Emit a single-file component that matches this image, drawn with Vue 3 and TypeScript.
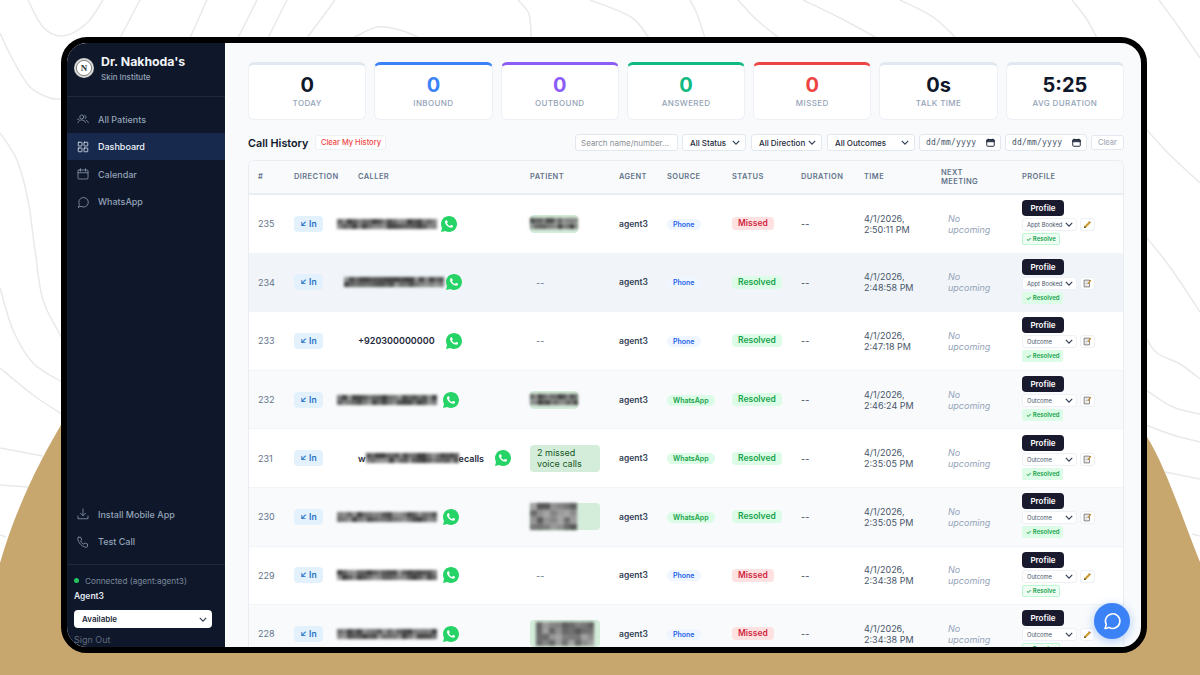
<script setup lang="ts">
type Row = {
  id: number
  callerShift?: number
  callerGap: number
  caller?: string
  split?: boolean
  patient: 'none' | 'slim' | 'text' | 'tall' | 'tall2'
  source: 'Phone' | 'WhatsApp'
  status: 'Missed' | 'Resolved'
  time: string
  outcome: string
  memo: boolean
  hover?: boolean
}

const stats = [
  { value: '0', label: 'TODAY', color: '#0f172a', top: '#e2e8f0' },
  { value: '0', label: 'INBOUND', color: '#3b82f6', top: '#3b82f6' },
  { value: '0', label: 'OUTBOUND', color: '#8b5cf6', top: '#8b5cf6' },
  { value: '0', label: 'ANSWERED', color: '#10b981', top: '#10b981' },
  { value: '0', label: 'MISSED', color: '#ef4444', top: '#ef4444' },
  { value: '0s', label: 'TALK TIME', color: '#0f172a', top: '#e2e8f0' },
  { value: '5:25', label: 'AVG DURATION', color: '#0f172a', top: '#e2e8f0' },
]

const rows: Row[] = [
  { id: 235, callerShift: -21, callerGap: 4, patient: 'slim', source: 'Phone', status: 'Missed', time: '2:50:11 PM', outcome: 'Appt Booked', memo: false },
  { id: 234, callerShift: -14, callerGap: 2, patient: 'none', source: 'Phone', status: 'Resolved', time: '2:48:58 PM', outcome: 'Appt Booked', memo: true, hover: true },
  { id: 233, caller: '+920300000000', callerGap: 11, patient: 'none', source: 'Phone', status: 'Resolved', time: '2:47:18 PM', outcome: 'Outcome', memo: true },
  { id: 232, callerShift: -21, callerGap: 6, patient: 'slim', source: 'WhatsApp', status: 'Resolved', time: '2:46:24 PM', outcome: 'Outcome', memo: true },
  { id: 231, split: true, callerGap: 11, patient: 'text', source: 'WhatsApp', status: 'Resolved', time: '2:35:05 PM', outcome: 'Outcome', memo: true },
  { id: 230, callerShift: -21, callerGap: 6, patient: 'tall', source: 'WhatsApp', status: 'Resolved', time: '2:35:05 PM', outcome: 'Outcome', memo: true },
  { id: 229, callerShift: -21, callerGap: 6, patient: 'none', source: 'Phone', status: 'Missed', time: '2:34:38 PM', outcome: 'Outcome', memo: false },
  { id: 228, callerShift: -21, callerGap: 6, patient: 'tall2', source: 'Phone', status: 'Missed', time: '2:34:38 PM', outcome: 'Outcome', memo: false },
]

// same blurred blocks every run, so the shot stays stable
function mosaic(seed: number, cols: number, lines: number, lo = 60, hi = 150) {
  let s = seed * 7919
  const next = () => {
    s = (s * 1103515245 + 12345) % 2147483648
    return lo + ((s >> 8) % (hi - lo))
  }
  const layers: string[] = []
  const rowPct = lines > 1 ? 100 / (lines - 1) : 0
  for (let r = 0; r < lines; r++) {
    const stops: string[] = []
    for (let c = 0; c < cols; c++) {
      const g = next()
      stops.push(`rgb(${g},${g},${g}) ${(c / cols) * 100}% ${((c + 1) / cols) * 100}%`)
    }
    layers.push(`linear-gradient(90deg,${stops.join(',')}) 0 ${r * rowPct}% / 100% ${100 / lines}% no-repeat`)
  }
  return layers.join(',')
}

function smooth(p: number[][]) {
  let d = `M${p[0][0]} ${p[0][1]}`
  for (let i = 0; i < p.length - 1; i++) {
    const a = p[i - 1] || p[i]
    const b = p[i]
    const c = p[i + 1]
    const e = p[i + 2] || c
    d += ` C${b[0] + (c[0] - a[0]) / 6} ${b[1] + (c[1] - a[1]) / 6} ${c[0] - (e[0] - b[0]) / 6} ${c[1] - (e[1] - b[1]) / 6} ${c[0]} ${c[1]}`
  }
  return d
}

const contours = [
  [[28, 0], [43, 27], [63, 36], [87, 23], [103, 0]],
  [[0, 33], [13, 60], [30, 87], [50, 98], [62, 99]],
  [[0, 133], [17, 160], [28, 200], [35, 250], [43, 300], [62, 338]],
  [[0, 288], [13, 330], [33, 363], [62, 382]],
  [[0, 368], [33, 395], [62, 414]],
  [[0, 448], [43, 456]],
  [[0, 485], [28, 487]],
  [[0, 535], [6, 537]],
  [[120, 38], [140, 0]],
  [[190, 38], [207, 0]],
  [[238, 38], [257, 0]],
  [[268, 38], [287, 0]],
  [[307, 38], [335, 0]],
  [[353, 38], [377, 27], [400, 30], [420, 38]],
  [[518, 0], [529, 14], [531, 38]],
  [[590, 0], [631, 17], [649, 38]],
  [[690, 0], [697, 14], [705, 38]],
  [[738, 0], [757, 20], [779, 38]],
  [[803, 0], [840, 18], [877, 38]],
  [[900, 0], [933, 17], [956, 38]],
  [[1072, 0], [1086, 18], [1097, 38]],
  [[1159, 0], [1178, 26], [1200, 58]],
  [[1146, 129], [1170, 155], [1200, 183]],
  [[1146, 237], [1170, 267], [1200, 312]],
  [[1146, 338], [1157, 353], [1180, 364], [1200, 379]],
  [[1146, 390], [1173, 407], [1200, 414]],
  [[1146, 425], [1173, 435], [1200, 442]],
  [[1165, 472], [1200, 479]],
  [[1192, 534], [1200, 536]],
].map(smooth)
</script>

<template>
  <div class="page">
    <svg class="backdrop" viewBox="0 0 1200 675" width="1200" height="675">
      <path v-for="(d, i) in contours" :key="i" :d="d" class="contour" />
      <path d="M0 563C15 510 40 460 61 425L200 300H1000L1147 437C1165 465 1185 525 1200 562V675H0Z" fill="#c8a76f" />
    </svg>

    <div class="frame">
      <aside class="sidebar">
        <div class="brand">
          <svg class="logo" viewBox="0 0 20 20" width="20" height="20">
            <circle cx="10" cy="10" r="10" fill="#d9d9d6" />
            <circle cx="10" cy="10" r="7.600" fill="#fff" stroke="#6b6b6b" stroke-width=".8" />
            <text x="10" y="13.200" text-anchor="middle" font-size="9" font-weight="700" font-family="Liberation Serif, serif" fill="#333">N</text>
          </svg>
          <div>
            <div class="brand-name">Dr. Nakhoda's</div>
            <div class="brand-sub">Skin Institute</div>
          </div>
        </div>

        <nav class="nav">
          <a class="nav-item">
            <svg class="nav-icon" viewBox="0 0 24 24"><circle cx="9.500" cy="8" r="4" /><path d="M1 12.500h3M2 19c1-3.500 4-5 7.500-5s6.500 1.500 7.500 5M15.500 4.500a4 4 0 0 1 1 7M19 15c2 .8 3 2 3.500 4.500" /></svg>
            All Patients
          </a>
          <a class="nav-item active">
            <svg class="nav-icon" viewBox="0 0 24 24"><rect x="2.500" y="2.500" width="7.500" height="7.500" rx="1" /><rect x="14" y="2.500" width="7.500" height="7.500" rx="1" /><rect x="2.500" y="14" width="7.500" height="7.500" rx="1" /><rect x="14" y="14" width="7.500" height="7.500" rx="1" /></svg>
            Dashboard
          </a>
          <a class="nav-item">
            <svg class="nav-icon" viewBox="0 0 24 24"><rect x="2" y="4" width="20" height="18" rx="2" /><path d="M2 9.500h20M7 1.500v5M17 1.500v5" /></svg>
            Calendar
          </a>
          <a class="nav-item">
            <svg class="nav-icon" viewBox="0 0 24 24"><path d="M3 22l1.800-4.800A9.500 9.500 0 1 1 8 20.600C6.300 21.500 4.800 22 3 22z" /></svg>
            WhatsApp
          </a>
        </nav>

        <div class="nav bottom">
          <a class="nav-item">
            <svg class="nav-icon" viewBox="0 0 24 24"><path d="M12 2v13M7 10.500l5 5 5-5M2 16v5.500h20V16" /></svg>
            Install Mobile App
          </a>
          <a class="nav-item">
            <svg class="nav-icon" viewBox="0 0 24 24"><path d="M3 2.500h4.500l2 5.500-2.500 2c1.300 2.800 3.500 5 6.500 6.500l2-2.500 5.500 2V21c0 1-1 1.500-2 1.500C10 22 2 13.500 1.500 4.500c0-1 .6-2 1.500-2z" /></svg>
            Test Call
          </a>
        </div>

        <div class="agent">
          <div class="conn"><span class="dot"></span>Connected (agent:agent3)</div>
          <div class="agent-name">Agent3</div>
          <select class="agent-select"><option>Available</option></select>
          <div class="signout">Sign Out</div>
        </div>
      </aside>

      <main class="main">
        <section class="stats">
          <div v-for="s in stats" :key="s.label" class="stat" :style="{ borderTopColor: s.top }">
            <div class="stat-value" :style="{ color: s.color }">{{ s.value }}</div>
            <div class="stat-label">{{ s.label }}</div>
          </div>
        </section>

        <div class="toolbar">
          <h2 class="title">Call History</h2>
          <button class="clear-mine">Clear My History</button>
          <div class="filters">
            <input class="search" placeholder="Search name/number..." />
            <select class="filter w-status"><option>All Status</option></select>
            <select class="filter w-direction"><option>All Direction</option></select>
            <select class="filter w-outcome"><option>All Outcomes</option></select>
            <div v-for="n in 2" :key="n" class="date">
              <span>dd/mm/yyyy</span>
              <svg viewBox="0 0 12 12" width="9" height="9"><rect x="1" y="2" width="10" height="9" rx="1" fill="none" stroke="#1e293b" stroke-width="1.300" /><path d="M1 3h10v2H1zM3 .8v2M9 .8v2" fill="#1e293b" stroke="#1e293b" /></svg>
            </div>
            <button class="clear-all">Clear</button>
          </div>
        </div>

        <div class="table-wrap">
          <table class="calls">
            <colgroup>
              <col style="width: 36px" /><col style="width: 64px" /><col style="width: 172px" /><col style="width: 89px" />
              <col style="width: 48px" /><col style="width: 65px" /><col style="width: 69px" /><col style="width: 63px" />
              <col style="width: 77px" /><col style="width: 81px" /><col />
            </colgroup>
            <thead>
              <tr>
                <th>#</th><th>DIRECTION</th><th>CALLER</th><th>PATIENT</th><th>AGENT</th><th>SOURCE</th>
                <th>STATUS</th><th>DURATION</th><th>TIME</th><th>NEXT<br />MEETING</th><th>PROFILE</th>
              </tr>
            </thead>
            <tbody>
              <tr v-for="(r, i) in rows" :key="r.id" :class="{ alt: i % 2 === 1, hover: r.hover }">
                <td class="num">{{ r.id }}</td>
                <td><span class="dir">↙ In</span></td>
                <td>
                  <div class="caller">
                    <span v-if="r.caller">{{ r.caller }}</span>
                    <template v-else-if="r.split">
                      <span>w</span>
                      <i class="blur" :style="{ width: '93px', height: '10px', background: mosaic(r.id, 20, 2) }"></i>
                      <span>ecalls</span>
                    </template>
                    <i v-else class="blur" :style="{ width: '100px', height: '10px', marginLeft: r.callerShift + 'px', background: mosaic(r.id, 20, 2) }"></i>
                    <svg class="wa" :style="{ marginLeft: r.callerGap + 'px' }" viewBox="0 0 24 24" width="16" height="16">
                      <path fill="#25d366" d="M12 0C5.373 0 0 5.373 0 12c0 2.117.554 4.100 1.523 5.824L0 24l6.335-1.652A11.940 11.940 0 0 0 12 24c6.627 0 12-5.373 12-12S18.627 0 12 0z" />
                      <path fill="#fff" d="M17.472 14.382c-.297-.149-1.758-.867-2.030-.967-.273-.099-.471-.148-.67.150-.197.297-.767.966-.94 1.164-.173.199-.347.223-.644.075-.297-.150-1.255-.463-2.390-1.475-.883-.788-1.480-1.761-1.653-2.059-.173-.297-.018-.458.130-.606.134-.133.298-.347.446-.520.149-.174.198-.298.298-.497.099-.198.050-.371-.025-.520-.075-.149-.669-1.612-.916-2.207-.242-.579-.487-.500-.669-.510-.173-.008-.371-.010-.570-.010-.198 0-.520.074-.792.372-.272.297-1.040 1.016-1.040 2.479 0 1.462 1.065 2.875 1.213 3.074.149.198 2.096 3.200 5.077 4.487.709.306 1.262.489 1.694.625.712.227 1.360.195 1.871.118.571-.085 1.758-.719 2.006-1.413.248-.694.248-1.289.173-1.413-.074-.124-.272-.198-.570-.347z" />
                    </svg>
                  </div>
                </td>
                <td>
                  <span v-if="r.patient === 'none'" class="dash pad">--</span>
                  <div v-else-if="r.patient === 'slim'" class="tag slim">
                    <i class="blur" :style="{ width: '48px', height: '11px', background: mosaic(r.id + 3, 12, 2) }"></i>
                  </div>
                  <div v-else-if="r.patient === 'text'" class="tag wide text">2 missed<br />voice calls</div>
                  <div v-else-if="r.patient === 'tall'" class="tag wide tall">
                    <i class="blur" :style="{ width: '47px', height: '27px', background: mosaic(r.id, 7, 4, 85, 165) }"></i>
                  </div>
                  <div v-else class="tag wide tall">
                    <i class="blur inset" :style="{ width: '58px', height: '24px', background: mosaic(r.id, 9, 4, 85, 165) }"></i>
                  </div>
                </td>
                <td class="agent-cell">agent3</td>
                <td><span class="source" :class="r.source === 'Phone' ? 'phone' : 'whats'">{{ r.source }}</span></td>
                <td><span class="status" :class="r.status.toLowerCase()">{{ r.status }}</span></td>
                <td class="dash">--</td>
                <td class="time">4/1/2026,<br />{{ r.time }}</td>
                <td class="next">No<br />upcoming</td>
                <td>
                  <div class="profile">
                    <button class="profile-btn">Profile</button>
                    <div class="profile-line">
                      <select class="outcome"><option>{{ r.outcome }}</option></select>
                      <button class="edit">
                        <svg v-if="r.memo" viewBox="0 0 12 12" width="9" height="9"><path d="M1.500 1.500h7v9h-7z" fill="#fff" stroke="#555" stroke-width="1" /><path d="M3 4h4M3 6h4M3 8h3" stroke="#999" stroke-width=".7" /><path d="M6.500 6.500L10.500 1.500" stroke="#c58b2a" stroke-width="1.500" /></svg>
                        <svg v-else viewBox="0 0 12 12" width="9" height="9"><path d="M1.500 10.500l.6-2.600 6-6 2 2-6 6z" fill="#d19a2a" /><path d="M8.100 1.900l2 2" stroke="#7a4b1e" stroke-width="1.200" /><path d="M1.500 10.500l.6-2.600 2 2z" fill="#3d2c1c" /></svg>
                      </button>
                    </div>
                    <span class="resolve" :class="{ done: r.memo }">✓ {{ r.memo ? 'Resolved' : 'Resolve' }}</span>
                  </div>
                </td>
              </tr>
            </tbody>
          </table>
        </div>

        <button class="fab">
          <svg viewBox="0 0 24 24" width="20" height="20"><path d="M3.500 21l1.700-4.600A8.700 8.700 0 1 1 8.300 19.600C6.800 20.400 5.200 20.900 3.500 21z" fill="none" stroke="#fff" stroke-width="1.800" stroke-linejoin="round" /></svg>
        </button>
      </main>
    </div>
  </div>
</template>

<style scoped>
.page {
  position: relative;
  width: 1200px;
  height: 675px;
  overflow: hidden;
  padding: 37px 53px 22px 61px;
  box-sizing: border-box;
  font-family: Inter, "Liberation Sans", sans-serif;
}
.backdrop {
  position: absolute;
  left: 0;
  top: 0;
}
.contour {
  fill: none;
  stroke: #e9e9e9;
  stroke-width: 1.500;
}
.frame {
  position: relative;
  display: flex;
  height: 616px;
  box-sizing: border-box;
  border: 6px solid #000;
  border-radius: 26px;
  overflow: hidden;
  background: #f8fafc;
}

/* sidebar */
.sidebar {
  width: 158px;
  flex: none;
  display: flex;
  flex-direction: column;
  background: #0f172a;
  color: #94a3b8;
}
.brand {
  display: flex;
  align-items: center;
  gap: 7px;
  height: 54px;
  padding: 0 7px 4px;
  box-sizing: border-box;
  border-bottom: 1px solid #1e293b;
}
.logo {
  flex: none;
  margin-top: 1px;
}
.brand-name {
  font-size: 12.300px;
  font-weight: 700;
  color: #f1f5f9;
  line-height: 15px;
}
.brand-sub {
  font-size: 8px;
  font-weight: 500;
  color: #94a3b8;
  margin-top: 3px;
}
.nav {
  display: flex;
  flex-direction: column;
  padding-top: 8px;
}
.nav.bottom {
  margin-top: auto;
  padding: 0 0 9px;
  border-bottom: 1px solid #1e293b;
}
.nav-item {
  display: flex;
  align-items: center;
  gap: 9px;
  height: 27.500px;
  box-sizing: border-box;
  padding: 1px 0 0 10px;
  font-size: 9px;
  font-weight: 500;
  color: #94a3b8;
}
.nav-item.active {
  background: #172a4d;
  color: #f1f5f9;
}
.nav-icon {
  width: 12px;
  height: 12px;
  flex: none;
  fill: none;
  stroke: currentColor;
  stroke-width: 1.500;
  stroke-linecap: round;
  stroke-linejoin: round;
}
.agent {
  padding: 10px 7px 0;
  height: 82px;
  box-sizing: border-box;
}
.conn {
  display: flex;
  align-items: center;
  gap: 6px;
  font-size: 8.200px;
  color: #7c899c;
  height: 11px;
}
.dot {
  width: 5px;
  height: 5px;
  border-radius: 50%;
  background: #22c55e;
}
.agent-name {
  font-size: 8.500px;
  font-weight: 600;
  color: #e2e8f0;
  margin-top: 5px;
  height: 11px;
}
select {
  appearance: none;
  background-color: #fff;
  background-image: url("data:image/svg+xml,%3Csvg xmlns='http://www.w3.org/2000/svg' viewBox='0 0 10 6'%3E%3Cpath d='M1 1l4 4 4-4' fill='none' stroke='%23334155' stroke-width='1.500'/%3E%3C/svg%3E");
  background-repeat: no-repeat;
  background-position: right 5px center;
  background-size: 8px 5px;
  outline: none;
}
.agent-select {
  display: block;
  width: 138px;
  height: 18px;
  margin-top: 8px;
  padding: 0 8px;
  border: 0;
  border-radius: 4px;
  font: 600 8px Inter, sans-serif;
  color: #1e293b;
}
.signout {
  font-size: 9px;
  color: #5e6b7e;
  margin-top: 6px;
}

/* main */
.main {
  position: relative;
  flex: 1;
  min-width: 0;
  padding: 19px 17px 0 22px;
  border-left: 1px solid #fff;
  overflow: hidden;
}
.stats {
  display: grid;
  grid-template-columns: repeat(7, 1fr);
  gap: 8px;
}
.stat {
  height: 58px;
  box-sizing: border-box;
  background: #fff;
  border: 1px solid #edf1f6;
  border-top: 3px solid;
  border-radius: 6px;
  text-align: center;
  padding-top: 8px;
}
.stat-value {
  font-size: 20px;
  font-weight: 700;
  line-height: 24px;
}
.stat-label {
  font-size: 8px;
  font-weight: 500;
  letter-spacing: .4px;
  color: #94a3b8;
  margin-top: 1px;
}
.toolbar {
  display: flex;
  align-items: center;
  margin-top: 13px;
  height: 19px;
}
.title {
  margin: 1px 0 0;
  font-size: 10.800px;
  font-weight: 600;
  color: #0f172a;
}
.clear-mine {
  margin-left: 7px;
  height: 15px;
  width: 71px;
  padding: 0;
  background: #fff;
  border: 1px solid #edf1f6;
  border-radius: 3px;
  font: 500 7.500px Inter, sans-serif;
  color: #ef4444;
}
.filters {
  margin-left: auto;
  display: flex;
  align-items: center;
  gap: 4px;
}
.search {
  width: 103px;
  height: 17px;
  box-sizing: border-box;
  padding: 0 5px;
  background: #fff;
  border: 1px solid #e2e8f0;
  border-radius: 3px;
  font: 400 8px Inter, sans-serif;
  outline: none;
}
.search::placeholder {
  color: #8b8f96;
}
.filter {
  height: 17px;
  padding: 0 7px;
  border: 1px solid #e2e8f0;
  border-radius: 3px;
  font: 500 8px Inter, sans-serif;
  color: #1e293b;
}
.w-status { width: 64px; }
.w-direction { width: 71px; margin-left: 1px; }
.w-outcome { width: 88px; margin-left: 1px; }
.date {
  width: 82px;
  height: 17px;
  box-sizing: border-box;
  display: flex;
  align-items: center;
  justify-content: space-between;
  padding: 0 5px 0 6px;
  background: #fff;
  border: 1px solid #e2e8f0;
  border-radius: 3px;
  font: 500 8px "DejaVu Sans Mono", monospace;
  letter-spacing: .2px;
  color: #475569;
}
.clear-all {
  width: 33px;
  height: 15px;
  padding: 0;
  background: #fff;
  border: 1px solid #e2e8f0;
  border-radius: 3px;
  font: 500 7.500px Inter, sans-serif;
  color: #a3acb9;
}

/* table */
.table-wrap {
  margin-top: 8px;
  background: #fff;
  border: 1px solid #e9edf3;
  border-bottom: 0;
  border-radius: 6px 6px 0 0;
  overflow: hidden;
}
.calls {
  width: 100%;
  table-layout: fixed;
  border-collapse: collapse;
}
.calls th {
  height: 32px;
  padding: 0 10px 0 9px;
  text-align: left;
  font-size: 7.500px;
  line-height: 9.500px;
  font-weight: 600;
  letter-spacing: .4px;
  color: #64748b;
  background: #f8fafc;
  border-bottom: 2px solid #e8edf4;
}
.calls td {
  height: 57.600px;
  padding: 0 10px 0 9px;
  font-size: 9px;
  color: #334155;
  border-bottom: 1px solid #f1f5f9;
  vertical-align: middle;
}
.alt td {
  background: #f8fafc;
}
.hover td {
  background: #f1f5f9;
}
.num {
  color: #64748b !important;
}
.dir {
  display: inline-block;
  height: 16px;
  width: 29px;
  text-align: center;
  line-height: 16px;
  border-radius: 4px;
  background: #e3f1fd;
  color: #1f72c6;
  font-size: 8.500px;
  font-weight: 600;
}
.caller {
  display: flex;
  align-items: center;
  font-size: 9px;
  font-weight: 600;
  color: #1e293b;
  white-space: nowrap;
}
.blur {
  display: block;
  flex: none;
  filter: blur(1.500px);
}
.wa {
  flex: none;
}
.tag {
  display: block;
  background: #d4edda;
  border-radius: 4px;
  color: #155724;
}
.slim {
  width: 48px;
  height: 18px;
  display: flex;
  align-items: center;
}
.wide {
  width: 70px;
}
.text {
  box-sizing: border-box;
  height: 27px;
  padding: 2px 7px;
  font-size: 9px;
  line-height: 11px;
}
.tall {
  height: 27px;
  display: flex;
  align-items: center;
}
.inset {
  margin-left: 6px;
}
.dash {
  color: #64748b;
}
.pad {
  padding-left: 6px;
}
.agent-cell {
  font-size: 8.500px !important;
  font-weight: 600;
}
.source {
  display: inline-block;
  height: 11px;
  line-height: 11px;
  padding: 0 6px;
  border-radius: 6px;
  font-size: 7px;
  font-weight: 600;
}
.phone {
  background: #eff6ff;
  color: #2563eb;
}
.whats {
  background: #dcfce7;
  color: #16a34a;
}
.status {
  display: inline-block;
  height: 13px;
  line-height: 13px;
  padding: 0 6px;
  border-radius: 4px;
  font-size: 8.500px;
  font-weight: 600;
}
.missed {
  background: #fee2e2;
  color: #d0273f;
}
.resolved {
  background: #dcfce7;
  color: #16a34a;
}
.time {
  font-size: 9px !important;
  line-height: 11px;
  color: #475569 !important;
  white-space: nowrap;
}
.next {
  font-size: 9px !important;
  font-style: italic;
  line-height: 11px;
  color: #94a3b8 !important;
  padding-left: 16px !important;
}
.profile {
  display: flex;
  flex-direction: column;
  align-items: flex-start;
  gap: 2px;
  padding-bottom: 2px;
}
.profile-btn {
  width: 42px;
  height: 16px;
  padding: 0;
  border: 0;
  border-radius: 4px;
  background: #1a1a2e;
  color: #fff;
  font: 600 8px Inter, sans-serif;
}
.profile-line {
  display: flex;
  align-items: center;
  gap: 3px;
}
.outcome {
  width: 55px;
  height: 13px;
  padding: 0 4px;
  border: 1px solid #edf1f6;
  border-radius: 3px;
  font: 400 5.800px Inter, sans-serif;
  color: #475569;
  background-position: right 3px center;
  background-size: 8px 5px;
}
.edit {
  width: 15px;
  height: 13px;
  padding: 0;
  display: flex;
  align-items: center;
  justify-content: center;
  background: #fff;
  border: 1px solid #edf1f6;
  border-radius: 3px;
}
.resolve {
  box-sizing: border-box;
  height: 12px;
  line-height: 10px;
  padding: 0 3px;
  background: #f0fdf4;
  border: 1px solid #bbf7d0;
  border-radius: 2px;
  font-size: 6px;
  font-weight: 600;
  color: #16a34a;
}
.resolve.done {
  background: #dcfce7;
  border-color: #dcfce7;
}
.fab {
  position: absolute;
  left: 868px;
  bottom: 8px;
  width: 36px;
  height: 36px;
  padding: 0;
  display: flex;
  align-items: center;
  justify-content: center;
  border: 0;
  border-radius: 50%;
  background: #3b82f6;
  box-shadow: 0 2px 10px rgba(59, 130, 246, .4);
}
</style>

<style>
html,
body {
  margin: 0;
  overflow: hidden;
  background: #fff;
}
</style>
